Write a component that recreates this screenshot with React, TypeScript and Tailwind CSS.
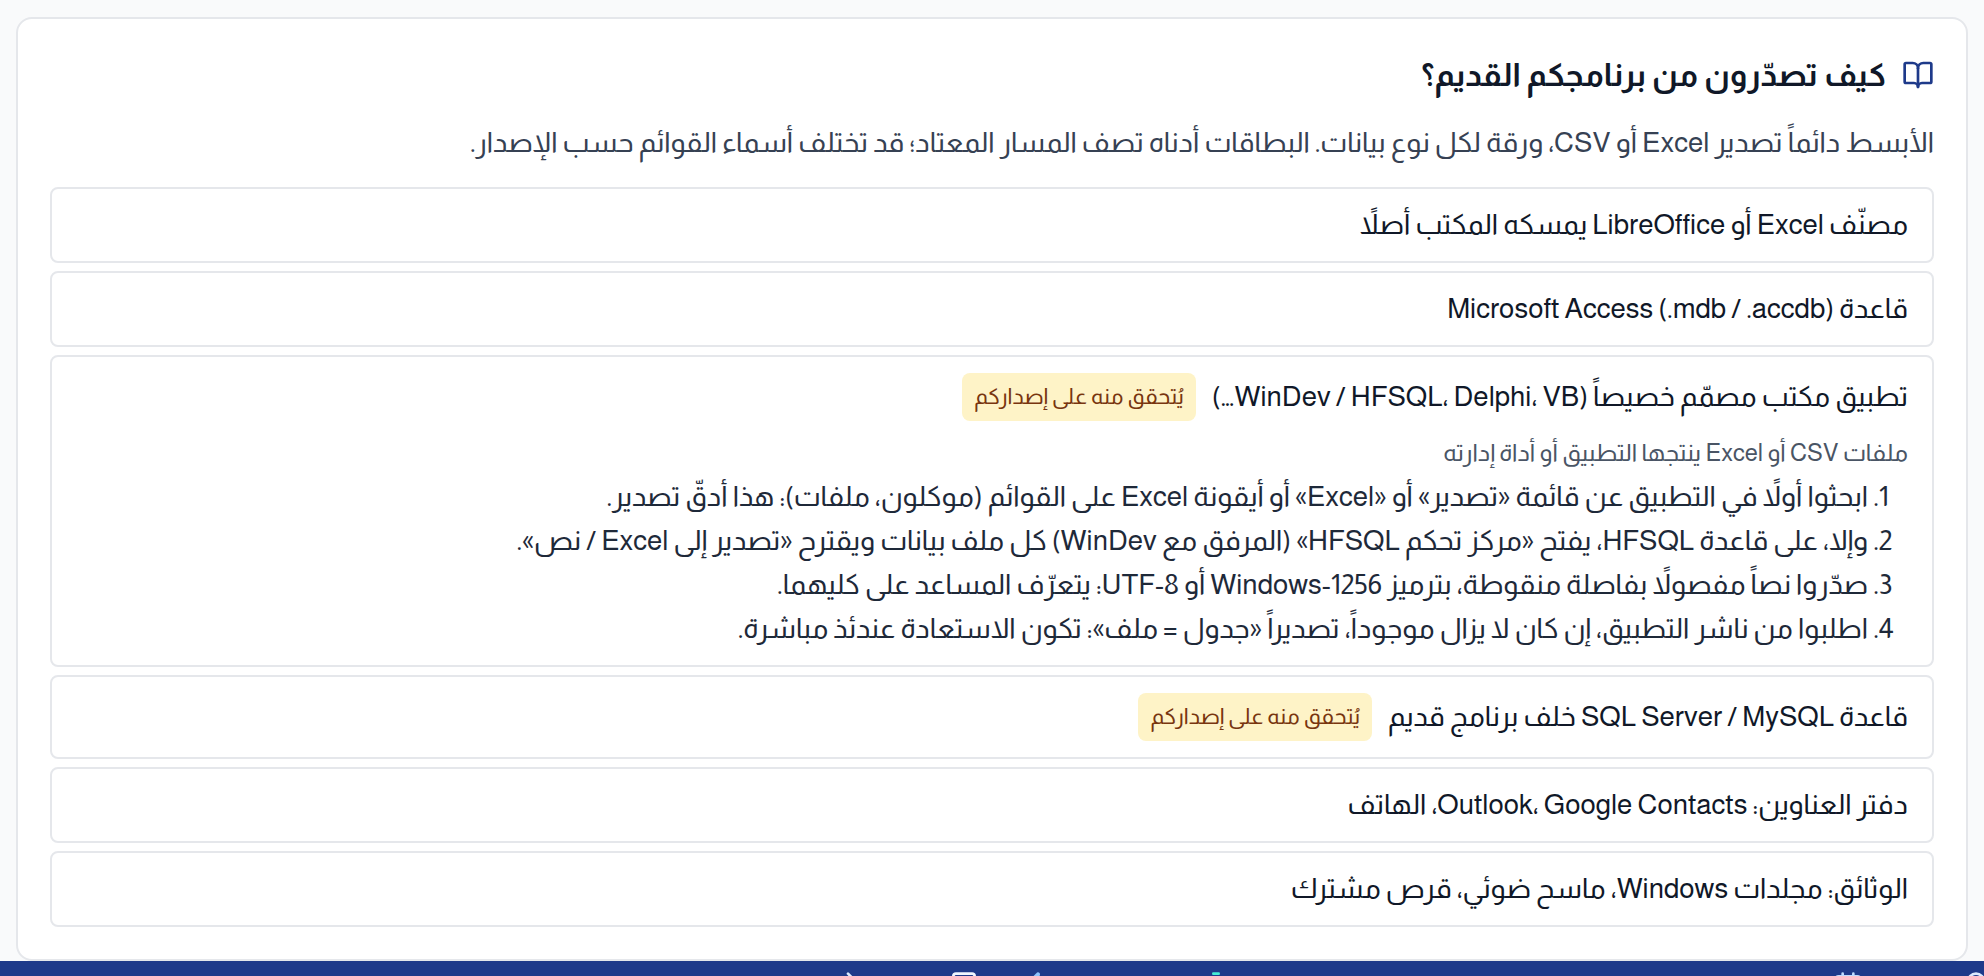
import type { ReactNode } from "react";
import { Award, BookOpen, Calculator, CalendarDays, Timer, Zap } from "lucide-react";

type ExportGuide = {
  id: string;
  title: string;
  needsCheck?: boolean;
  output?: string;
  steps?: string[];
};

const guides: ExportGuide[] = [
  { id: "spreadsheet", title: "مصنّف Excel أو LibreOffice يمسكه المكتب أصلاً" },
  { id: "access", title: "قاعدة Microsoft Access (.mdb / .accdb)" },
  {
    id: "custom-app",
    title: "تطبيق مكتب مصمّم خصيصاً (WinDev / HFSQL، Delphi، VB…)",
    needsCheck: true,
    output: "ملفات CSV أو Excel ينتجها التطبيق أو أداة إدارته",
    steps: [
      "ابحثوا أولاً في التطبيق عن قائمة «تصدير» أو «Excel» أو أيقونة Excel على القوائم (موكلون، ملفات): هذا أدقّ تصدير.",
      "وإلا، على قاعدة HFSQL، يفتح «مركز تحكم HFSQL» (المرفق مع WinDev) كل ملف بيانات ويقترح «تصدير إلى Excel / نص».",
      "صدّروا نصاً مفصولاً بفاصلة منقوطة، بترميز Windows-1256 أو UTF-8: يتعرّف المساعد على كليهما.",
      "اطلبوا من ناشر التطبيق، إن كان لا يزال موجوداً، تصديراً «جدول = ملف»: تكون الاستعادة عندئذ مباشرة.",
    ],
  },
  { id: "sql", title: "قاعدة SQL Server / MySQL خلف برنامج قديم", needsCheck: true },
  { id: "contacts", title: "دفتر العناوين: Outlook، Google Contacts، الهاتف" },
  { id: "documents", title: "الوثائق: مجلدات Windows، ماسح ضوئي، قرص مشترك" },
];

const navItems: { href: string; label: string; className: string; icon: ReactNode }[] = [
  {
    href: "#account",
    label: "الحساب",
    className: "-mr-2 text-blue-100",
    icon: <Award className="size-8" />,
  },
  {
    href: "#agenda",
    label: "المواعيد",
    className: "mr-24 text-blue-200",
    icon: <CalendarDays className="size-8" />,
  },
  {
    href: "#deadlines",
    label: "الآجال",
    className: "mr-[600px] text-teal-300",
    icon: <Timer className="size-8" />,
  },
  {
    href: "#actions",
    label: "إجراءات",
    className: "mr-[148px] text-blue-300",
    icon: <Zap className="size-8" />,
  },
  {
    href: "#fees",
    label: "الأتعاب",
    className: "mr-10 text-blue-50",
    icon: <Calculator className="size-8" />,
  },
  {
    href: "#next",
    label: "التالي",
    className: "mr-20 text-blue-100",
    icon: (
      <svg
        viewBox="0 0 24 24"
        className="size-8"
        fill="none"
        stroke="currentColor"
        strokeWidth={2}
        strokeLinecap="round"
        strokeLinejoin="round"
      >
        <path d="m9 2 10 10L9 22" />
      </svg>
    ),
  },
];

function CheckBadge() {
  return (
    <span className="rounded-lg bg-[#fef3c7] px-3 py-2 text-[22px] leading-8 text-[#78350f]">
      يُتحقق منه على إصداركم
    </span>
  );
}

function GuideCard({ guide }: { guide: ExportGuide }) {
  return (
    <details
      open={Boolean(guide.steps)}
      className="rounded-lg border-2 border-gray-200 px-6 py-4"
    >
      <summary className="flex cursor-pointer list-none flex-wrap items-center gap-4 text-[28px] leading-10 text-gray-900">
        <span>{guide.title}</span>
        {guide.needsCheck && <CheckBadge />}
      </summary>
      {guide.output && (
        <p className="mt-4 text-2xl leading-8 text-gray-600">{guide.output}</p>
      )}
      {guide.steps && (
        <ol className="mt-1 list-decimal pr-10 text-[28px] leading-10 text-gray-800">
          {guide.steps.map((step) => (
            <li key={step} className="pt-1">
              {step}
            </li>
          ))}
        </ol>
      )}
    </details>
  );
}

export default function App() {
  return (
    <div
      dir="rtl"
      lang="ar"
      className="flex h-screen flex-col overflow-hidden bg-gray-50 font-['Almarai','Noto_Sans_Arabic','Liberation_Sans',sans-serif]"
    >
      <main className="shrink-0 px-4 pt-[17px]">
        <section className="rounded-2xl border-2 border-gray-200 bg-white p-8">
          <h2 className="flex items-center gap-4 text-[32px] leading-[48px] font-bold text-gray-900">
            <BookOpen className="size-8 text-[#1e3a8a]" aria-hidden />
            كيف تصدّرون من برنامجكم القديم؟
          </h2>
          <p className="mt-4 text-[28px] leading-[56px] text-gray-700">
            الأبسط دائماً تصدير Excel أو CSV، ورقة لكل نوع بيانات. البطاقات أدناه تصف المسار
            المعتاد؛ قد تختلف أسماء القوائم حسب الإصدار.
          </p>
          <div className="mt-4 grid gap-2">
            {guides.map((guide) => (
              <GuideCard key={guide.id} guide={guide} />
            ))}
          </div>
        </section>
      </main>

      <nav className="flex shrink-0 bg-[#1e3a8a] py-[10px]" aria-label="التنقل">
        {navItems.map((item) => (
          <a key={item.href} href={item.href} aria-label={item.label} className={item.className}>
            {item.icon}
          </a>
        ))}
      </nav>
    </div>
  );
}
